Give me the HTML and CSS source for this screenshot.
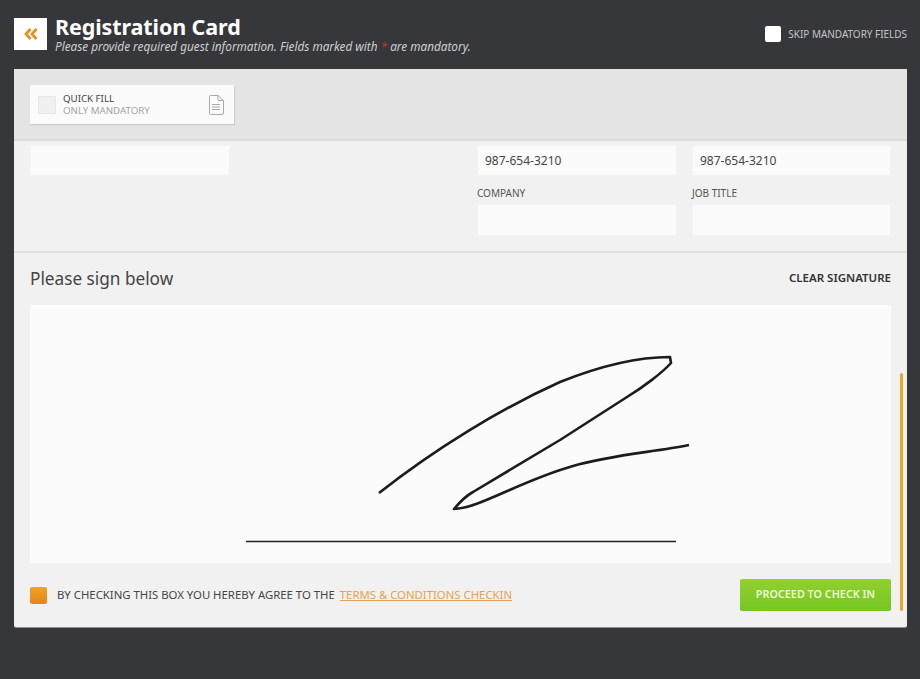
FILE: index.html
```html
<!DOCTYPE html>
<html lang="en">
<head>
  <meta charset="UTF-8" />
  <meta name="viewport" content="width=device-width, initial-scale=1.0" />
  <title>Registration Card</title>
  <link rel="stylesheet" href="styles.css">
</head>
<body>
  <header class="top-bar">
    <a class="back-btn" href="#">
      <svg width="14" height="12" viewBox="0 0 14 12">
        <path d="M6.500 1 2 6l4.500 5M12.500 1 8 6l4.500 5" fill="none" stroke="#e8901c" stroke-width="2.800" />
      </svg>
    </a>
    <div class="titles">
      <h1>Registration Card</h1>
      <p>Please provide required guest information. Fields marked with <span class="req">*</span> are mandatory.</p>
    </div>
    <label class="skip">
      <span class="skip-box"></span>
      SKIP MANDATORY FIELDS
    </label>
  </header>

  <main class="card">
    <div class="quick-section">
      <div class="quick-fill">
        <span class="quick-box"></span>
        <div class="quick-text">
          <strong>QUICK FILL</strong>
          <span>ONLY MANDATORY</span>
        </div>
        <svg class="doc-icon" width="16" height="20" viewBox="0 0 16 20">
          <path d="M1.500 1.500a1 1 0 0 1 1-1H10L15.500 5.500V18a1.500 1.500 0 0 1-1.500 1.500H2.500a1 1 0 0 1-1-1z" fill="none" stroke="#a9a9a9" />
          <path d="M10 .5v5h5.500M4 9.500h8M4 12h8M4 14.500h8" fill="none" stroke="#a9a9a9" />
        </svg>
      </div>
    </div>

    <div class="form-section">
      <div class="field"><div class="input"></div></div>
      <div class="field col-c"><div class="input">987-654-3210</div></div>
      <div class="field col-d"><div class="input">987-654-3210</div></div>
      <div class="field col-c">
        <label>COMPANY</label>
        <div class="input"></div>
      </div>
      <div class="field col-d">
        <label>JOB TITLE</label>
        <div class="input"></div>
      </div>
    </div>

    <div class="sign-section">
      <div class="sign-head">
        <h2>Please sign below</h2>
        <a class="clear-link" href="#">CLEAR SIGNATURE</a>
      </div>
      <div class="sign-pad">
        <svg width="861" height="258" viewBox="0 0 861 258">
          <path class="stroke" d="M349 188C405 144 470 104 530 77C570 61 605 52 640 52L641 58C632 68 612 83 597 92L530 135L443 187C434 192 429 198 424 204C450 203 490 176 543 161C580 150 625 147 659 140" />
          <path class="sign-line" d="M216 236.500H646" />
        </svg>
      </div>
      <div class="sign-foot">
        <span class="agree-box"></span>
        <span class="agree-text">BY CHECKING THIS BOX YOU HEREBY AGREE TO THE</span>
        <a class="terms" href="#">TERMS &amp; CONDITIONS CHECKIN</a>
        <button class="proceed" type="button">PROCEED TO CHECK IN</button>
      </div>
    </div>
    <div class="scroll-thumb"></div>
  </main>
</body>
</html>
```

FILE: styles.css
```css
body {
  font-family: "Noto Sans", Arial, sans-serif;
  margin: 0;
  height: 679px;
  overflow: hidden;
  background-color: #36373b;
  color: #444;
}
.top-bar {
  height: 69px;
  box-sizing: border-box;
  padding: 18px 13px 0 14px;
  display: flex;
  align-items: flex-start;
}
.back-btn {
  width: 33px;
  height: 32px;
  background-color: #fff;
  display: flex;
  align-items: center;
  justify-content: center;
  flex-shrink: 0;
}
.titles {
  margin-left: 8px;
  margin-top: -3px;
}
.titles h1 {
  margin: 0;
  color: #fff;
  font-size: 21.500px;
  line-height: 23px;
  font-weight: 700;
  letter-spacing: -0.1px;
}
.titles p {
  margin: 0;
  color: #d0d0d0;
  font-size: 11.750px;
  line-height: 16px;
  font-style: italic;
}
.req {
  color: #c0392b;
}
.skip {
  margin-left: auto;
  margin-top: 8px;
  display: flex;
  align-items: center;
  gap: 7px;
  color: #c4c4c6;
  font-size: 9.950px;
  white-space: nowrap;
}
.skip-box {
  width: 16px;
  height: 16px;
  background-color: #fff;
  border-radius: 2px;
}
.card {
  position: relative;
  width: 893px;
  height: 558px;
  margin-left: 14px;
  background-color: #f1f1f1;
  border-radius: 2px;
  box-shadow: 0 1px 0 #8f8f8f;
}
.quick-section {
  height: 72px;
  box-sizing: border-box;
  padding: 16px;
  background-color: #e4e4e4;
  border-bottom: 2px solid #dcdcdc;
}
.quick-fill {
  width: 204px;
  height: 39px;
  box-sizing: border-box;
  padding: 0 10px 0 8px;
  background-color: #fbfbfb;
  box-shadow: 1px 1px 1px #ccc;
  display: flex;
  align-items: center;
}
.quick-box {
  width: 16px;
  height: 16px;
  background-color: #f0f0f0;
  border: 1px solid #e8e8e8;
}
.quick-text {
  margin-left: 7px;
  display: flex;
  flex-direction: column;
  font-size: 9.700px;
  line-height: 12px;
}
.quick-text strong {
  font-weight: 400;
  color: #444;
}
.quick-text span {
  color: #a4a4a4;
}
.doc-icon {
  margin-left: auto;
}
.form-section {
  height: 112px;
  box-sizing: border-box;
  padding: 4px 16px 0;
  display: grid;
  grid-template-columns: 200px 247px 200px 214px;
  grid-template-rows: 31px 60px;
  border-bottom: 2px solid #dfdfdf;
}
.col-c {
  grid-column: 3;
}
.col-d {
  grid-column: 4;
  margin-left: 15px;
}
.field label {
  display: block;
  margin-top: 9px;
  height: 19px;
  font-size: 10px;
  line-height: 16px;
  color: #555;
}
.input {
  height: 31px;
  box-sizing: border-box;
  padding: 0 8px;
  background-color: #fbfbfb;
  box-shadow: inset 0 0 0 1px #f3f3f3;
  font-size: 12px;
  line-height: 31px;
  color: #444;
}
.field label + .input {
  height: 32px;
}
.sign-section {
  padding: 0 16px;
}
.sign-head {
  height: 52px;
  display: flex;
  align-items: center;
  justify-content: space-between;
}
.sign-head h2 {
  margin: 0 0 1px;
  font-size: 17.200px;
  font-weight: 400;
  color: #444;
}
.clear-link {
  margin-bottom: 3px;
  color: #333;
  font-size: 11.500px;
  font-weight: 600;
  text-decoration: none;
}
.sign-pad {
  height: 258px;
  background-color: #fbfbfb;
}
.sign-pad svg {
  display: block;
}
.stroke {
  fill: none;
  stroke: #1c1c1c;
  stroke-width: 2.600;
  stroke-linejoin: round;
}
.sign-line {
  fill: none;
  stroke: #222;
  stroke-width: 1.500;
}
.sign-foot {
  margin-top: 16px;
  display: flex;
  align-items: center;
  font-size: 11.350px;
}
.agree-box {
  width: 17px;
  height: 17px;
  border-radius: 2px;
  background: linear-gradient(#eca522, #e8831c);
}
.agree-text {
  margin: 0 0 2px 10px;
  color: #444;
}
.terms {
  margin: 0 0 2px 5px;
  color: #e8a04e;
}
.proceed {
  margin-left: auto;
  width: 151px;
  height: 32px;
  padding: 0 0 3px;
  border: 0;
  border-radius: 2px;
  background: linear-gradient(#93d02e, #75c722);
  color: #edf7dc;
  font-family: inherit;
  font-size: 10.800px;
  font-weight: 600;
}
.scroll-thumb {
  position: absolute;
  left: 886px;
  top: 304px;
  width: 3px;
  height: 238px;
  border-radius: 2px;
  background-color: #efa825;
}
```
